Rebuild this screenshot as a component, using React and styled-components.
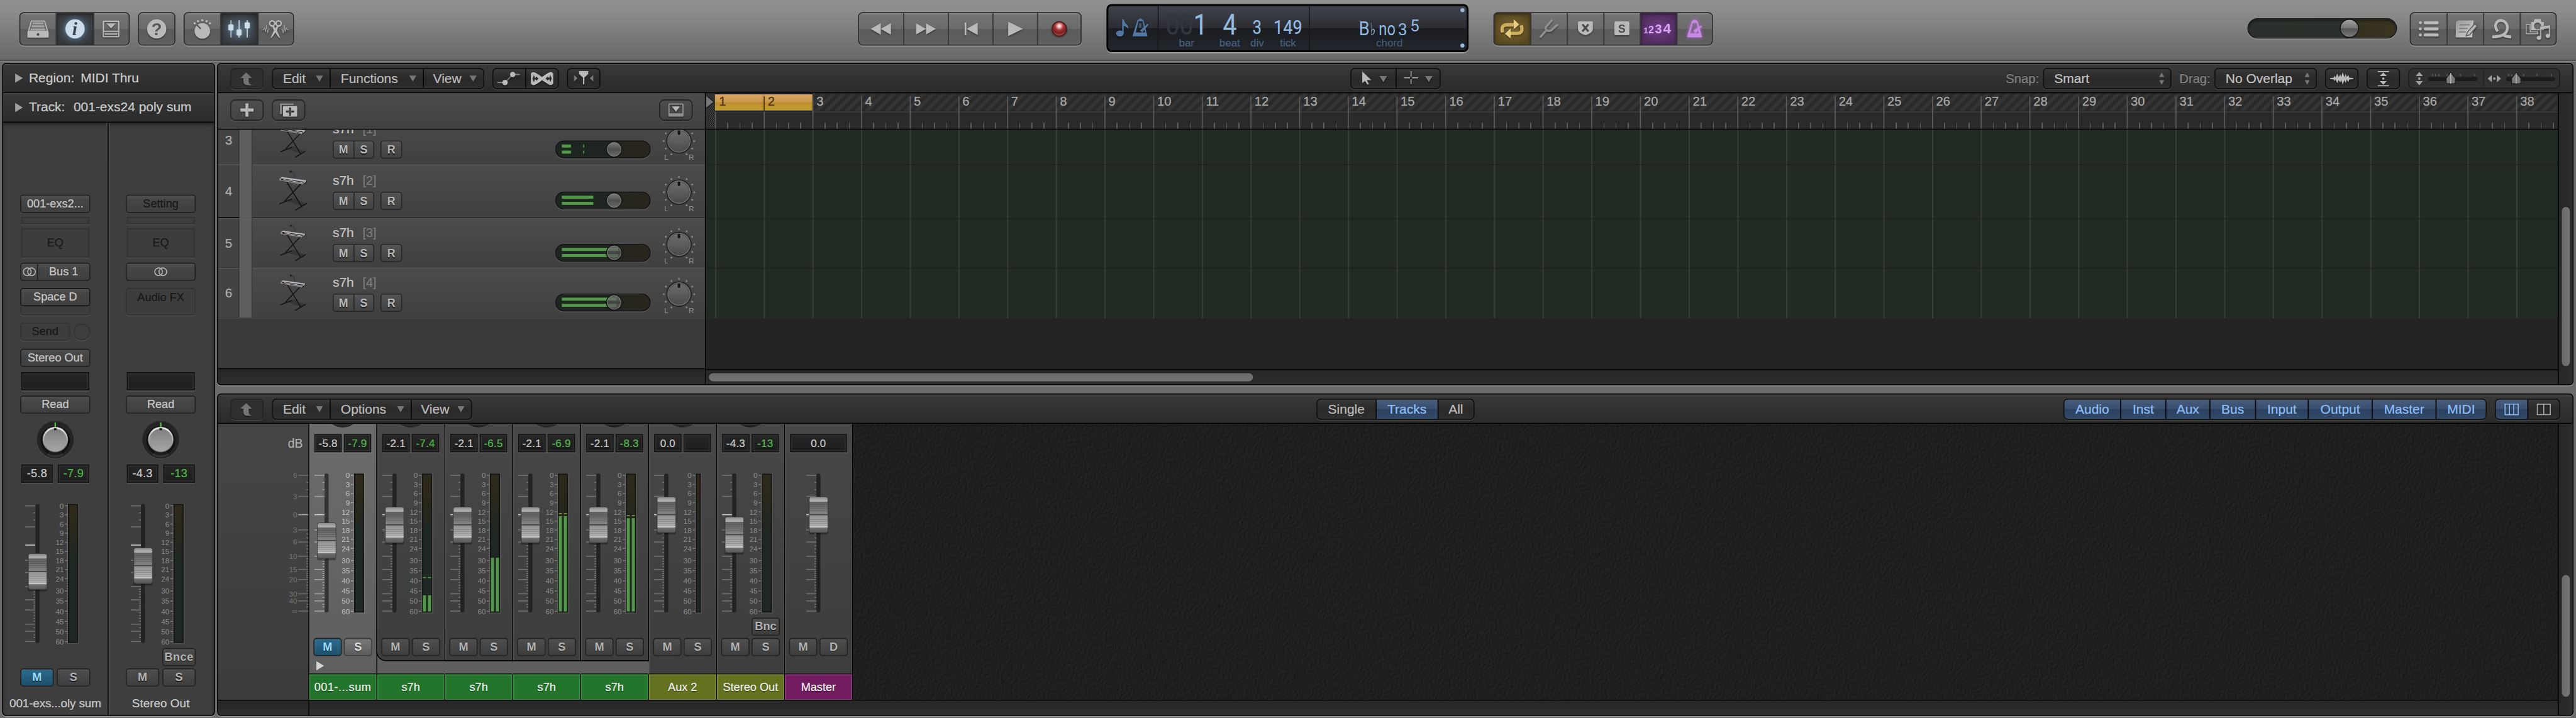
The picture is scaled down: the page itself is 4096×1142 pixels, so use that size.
import React from "react";
import styled, { createGlobalStyle, css } from "styled-components";

const Global = createGlobalStyle`
  html, body { margin: 0; padding: 0; background: #6b6b6b; overflow: hidden; }
  * { box-sizing: border-box; }
`;

const Viewport = styled.div`
  width: 4096px;
  height: 1142px;
  overflow: hidden;
`;

const Desk = styled.div`
  width: 5080px;
  height: 1416px;
  transform: scale(0.8063, 0.8065);
  transform-origin: 0 0;
  display: flex;
  flex-direction: column;
  background: #6b6b6b;
  font-family: "Liberation Sans", Arial, sans-serif;
  font-size: 26px;
  color: #c4c4c4;
  -webkit-text-stroke: 0.3px;
  white-space: pre;
`;

/* ---------- control bar ---------- */

const ControlBar = styled.header`
  flex: none;
  height: 124px;
  display: grid;
  grid-template-columns: 1692px 441px 49px 714px 49px 433px 1fr;
  align-items: start;
  background: linear-gradient(#919191, #8b8b8b 20%, #676767 118px, #4e4e4e 118px, #4e4e4e 120px, #868686 120px, #868686 122px, #6b6b6b 122px);
`;

const BarCell = styled.div`
  display: flex;
  padding: ${(p) => p.$pad || "24px 0 0"};
  gap: ${(p) => p.$gap || 0}px;
  justify-content: ${(p) => p.$justify || "flex-start"};
`;

const ButtonGroup = styled.div`
  display: flex;
  height: 66px;
  border: 2px solid #2e2e2e;
  border-radius: 9px;
  overflow: hidden;
  box-shadow: 0 2px 0 rgba(255, 255, 255, 0.22);
  background: #2e2e2e;
`;

const barTone = {
  plain: "linear-gradient(#7c7c7c 0, #747474 3px, #6a6a6a 50%, #5b5b5b 50%, #606060)",
  lit: "radial-gradient(ellipse at 50% 50%, #55616b 0, #3f464c 45%, #35383b 80%)",
  cycle: "radial-gradient(ellipse, #7b6837, #594820 75%)",
  count: "radial-gradient(ellipse, #6e3d82, #4f2d5e 75%)",
};

const BarButton = styled.button`
  all: unset;
  box-sizing: border-box;
  width: ${(p) => p.$w}px;
  height: 62px;
  display: flex;
  align-items: center;
  justify-content: center;
  background: ${(p) => barTone[p.$tone || "plain"]};
  box-shadow: ${(p) => (p.$tone && p.$tone !== "plain" ? "inset 0 2px 5px rgba(0,0,0,.5)" : "inset 0 2px 0 rgba(255,255,255,.14)")};
  & + & { border-left: 2px solid #3a3a3a; }
`;

const Glyph = styled.svg`
  display: block;
  width: 100%;
  height: 100%;
  overflow: visible;
  fill: #b9b9b9;
  filter: ${(p) => (p.$glow ? `drop-shadow(0 0 ${p.$spread || 5}px ${p.$glow})` : "drop-shadow(0 2px 1px rgba(0,0,0,.4))")};
`;

const Lcd = styled.div`
  margin-top: 8px;
  height: 95px;
  border: solid #000;
  border-width: 4px 4px 4px;
  border-radius: 10px;
  box-shadow: 0 2px 0 #a8a8a8;
  display: grid;
  grid-template-columns: 97px 298px 1fr;
  background: linear-gradient(#404349, #2a2c32 50%, #1a1c20 50%, #22252b);
`;

const LcdCell = styled.div`
  display: flex;
  height: 87px;
  & + & { border-left: 2px solid #16181b; }
`;

const Field = styled.div`
  width: ${(p) => p.$w}px;
  margin-left: ${(p) => p.$ml || 0}px;
  display: flex;
  flex-direction: column;
  align-items: center;
`;

const Digits = styled.div`
  height: 58px;
  display: flex;
  justify-content: center;
  align-items: flex-end;
  font-family: Roboto, sans-serif;
  font-size: ${(p) => p.$size}px;
  line-height: ${(p) => p.$size}px;
  padding-bottom: 0;
  color: #94bbe0;
  transform: translateY(${(p) => p.$drop || 0}px) scaleX(${(p) => p.$sx || 0.8});
  i { font-style: normal; color: #31373f; }
`;

const Caption = styled.div`
  font-size: 21px;
  line-height: 24px;
  color: #45607e;
  margin-top: 3px;
`;

const VolumePill = styled.div`
  width: 295px;
  height: 40px;
  margin-top: 12px;
  border-radius: 20px;
  padding: 2px;
  border: 2px solid #1b1b1b;
  background: linear-gradient(90deg, #2c302c, #2a302b 62%, #343120 72%, #3a3420);
  box-shadow: 0 2px 0 rgba(255, 255, 255, 0.18), inset 0 3px 4px rgba(0, 0, 0, 0.5);
  display: flex;
  justify-content: flex-end;
  align-items: center;
  padding-right: 73px;
`;

const PillThumb = styled.div`
  flex: none;
  width: ${(p) => p.$d}px;
  height: ${(p) => p.$d}px;
  border-radius: 50%;
  background: linear-gradient(#a0a0a0, #747474 48%, #565656 52%, #7b7b7b);
  border: 2px solid #161616;
  box-shadow: inset 0 1px 1px #aaa;
`;

/* ---------- panels ---------- */

const Body = styled.div`
  flex: 1;
  display: flex;
  gap: 4px;
  padding: 0 5px 4px 4px;
`;

const Panel = styled.section`
  border: 2px solid #000;
  border-radius: 8px;
  overflow: hidden;
  display: flex;
  flex-direction: column;
  background: #2c2c2c;
  box-shadow: 0 2px 0 #969696;
`;

const InspectorPanel = styled(Panel)`
  flex: none;
  width: 420px;
  background: #3e3e3e;
`;

const MainColumn = styled.div`
  flex: 1;
  min-width: 0;
  display: flex;
  flex-direction: column;
  gap: 16px;
`;

const ArrangePanel = styled(Panel)` flex: none; height: 636px; `;
const MixerPanel = styled(Panel)` flex: 1; `;

const DisclosureRow = styled.div`
  flex: none;
  height: 58px;
  border-bottom: 2px solid #000;
  box-shadow: inset 0 2px 0 #4c4c4c;
  background: linear-gradient(#383838, #2b2b2b);
  display: flex;
  align-items: center;
  padding: 0 0 1px 24px;
  color: #cdcdcd;
`;

const Arrow = styled.i`
  flex: none;
  width: 0;
  height: 0;
  border-left: 15px solid ${(p) => p.$c || "#a0a0a0"};
  border-top: 9px solid transparent;
  border-bottom: 9px solid transparent;
  margin-right: 12px;
`;

const RowName = styled.span` width: ${(p) => p.$w}px; `;

/* ---------- channel strips ---------- */

const Channels = styled.div`
  flex: 1;
  display: grid;
  grid-template-columns: 208px 1fr;
  box-shadow: inset 0 4px 6px rgba(0, 0, 0, 0.4);
`;

const Channel = styled.div`
  display: flex;
  flex-direction: column;
  align-items: center;
  & + & { box-shadow: inset 2px 0 0 #575757; padding-right: 2px; }
  &:first-child { border-right: 2px solid #000; box-shadow: inset -2px 0 0 #4a4a4a; }
`;

const Slot = styled.div`
  flex: none;
  width: ${(p) => p.$w || 138}px;
  height: ${(p) => p.$h || 36}px;
  margin-top: ${(p) => p.$mt || 0}px;
  display: flex;
  align-items: center;
  justify-content: center;
  font-size: 22.5px;
  border: 2px solid #202020;
  border-radius: 6px;
  color: #c9c9c9;
  background: linear-gradient(#505050, #464646 25%, #3f3f3f);
  box-shadow: inset 0 1px 0 #5b5b5b;
  ${(p) => p.$dim && css` color: #181818; `}
  ${(p) => p.$hollow && css`
    color: #181818;
    background: #3d3d3d;
    border-color: #323232;
    box-shadow: 0 2px 0 #4d4d4d;
  `}
  ${(p) => p.$square && css` border-radius: 0; `}
  ${(p) => p.$top && css` align-items: flex-start; line-height: 34px; `}
`;

const InnerSlot = styled(Slot)`
  margin: -2px -2px 0;
  border-color: #181818;
  line-height: normal;
  align-items: center;
`;

const Spacer = styled.div` flex: none; height: ${(p) => p.$h}px; `;
const Line = styled.div`
  flex: none;
  width: ${(p) => p.$w || 138}px;
  margin-top: ${(p) => p.$mt || 0}px;
  display: flex;
  justify-content: ${(p) => p.$justify || "space-between"};
`;

const SplitMark = styled.div`
  width: 33px;
  height: 32px;
  border-right: 2px solid #202020;
  display: flex;
  align-items: center;
  justify-content: center;
`;
const SplitText = styled.div` flex: 1; text-align: center; `;

const SendDial = styled.div`
  width: 33px;
  height: 33px;
  margin-top: 2px;
  border-radius: 50%;
  border: 2px solid #323232;
  box-shadow: 0 2px 0 #4d4d4d;
`;

const Readout = styled.div`
  flex: none;
  width: ${(p) => p.$w}px;
  height: 36px;
  margin-top: ${(p) => p.$mt || 0}px;
  border: 2px solid #111;
  box-shadow: inset 0 0 0 2px #303030, 0 2px 0 rgba(255, 255, 255, 0.12);
  background: linear-gradient(#262626, #1d1d1d);
  display: flex;
  align-items: center;
  justify-content: center;
  font-size: ${(p) => p.$size || 22.5}px;
  letter-spacing: 0.3px;
  color: ${(p) => (p.$green ? "#50b848" : "#c8c8c8")};
`;

const MiniButton = styled.button`
  all: unset;
  box-sizing: border-box;
  flex: none;
  width: ${(p) => p.$w || 66}px;
  height: 36px;
  border: 2px solid #222;
  border-radius: 6px;
  font-size: 22.5px;
  font-weight: 700;
  text-align: center;
  line-height: 32px;
  letter-spacing: ${(p) => p.$ls || 0}px;
  color: #b2b2b2;
  text-shadow: 0 2px 1px rgba(0, 0, 0, 0.6);
  -webkit-text-stroke: 0;
  background: linear-gradient(#4e4e4e, #3e3e3e);
  box-shadow: inset 0 1px 0 #5a5a5a;
  ${(p) => p.$tone === "mute" && css` color: #9adcff; background: linear-gradient(#2c6c8e, #1d4f6b); `}
  ${(p) => p.$tone === "pale" && css` color: #dcdcdc; background: linear-gradient(#787878, #5c5c5c); border-color: #3c3c3c; `}
`;

const ChannelName = styled.div`
  margin-top: 18px;
  line-height: 30px;
  font-size: 23.5px;
  letter-spacing: ${(p) => p.$ls || 0}px;
  color: #cacaca;
`;

const FaderArt = styled.svg`
  display: block;
  flex: none;
  overflow: visible;
  font-family: "Liberation Sans", Arial, sans-serif;
  -webkit-text-stroke: 0;
`;

const MAJOR = [3.5, 45, 81, 111, 135, 163, 189, 209, 237, 251, 271];
const MINOR = [17.5, 31.5, 119, 127, 142, 149, 156, 168, 173, 178, 183.5, 193, 197, 201, 205, 214.5, 220, 225.5, 231, 244, 258, 263];
const METER = [["0", 3.5], ["3", 21.5], ["6", 39.5], ["9", 57.5], ["12", 75.5], ["15", 93.5], ["18", 111.5], ["21", 129.5], ["24", 147.5], ["30", 171.5], ["35", 191.5], ["40", 211.5], ["45", 231.5], ["50", 251.5], ["60", 271.5]];

function meterMinor() {
  const out = [];
  for (let i = 0; i < METER.length - 1; i++) {
    const a = METER[i][1];
    const b = METER[i + 1][1];
    const n = b - a > 19 ? 5 : 6;
    for (let k = 1; k < n; k++) out.push(a + ((b - a) * k) / n);
  }
  return out;
}
const METER_MINOR = meterMinor();

function Fader({ at, meterX = 78, meterW = 20, level, peak, peakColor = "#56a046", bright, noMeter }) {
  const tick = bright ? "#a2a2a2" : "#727272";
  return (
    <FaderArt width="104" height="274" viewBox="0 0 104 274">
      {MAJOR.map((y, i) => (
        <rect key={y} x="0" y={y - 1} width="20" height="2" fill={i === 2 ? "#cfcfcf" : tick} />
      ))}
      {MINOR.map((y) => (
        <rect key={y} x="16" y={y - 1} width="4" height="2" fill={tick} />
      ))}
      <rect x="20" y="0" width="8" height="274" rx="3" fill={bright ? "#333" : "#232323"} />
      {!noMeter && (
        <g>
          {METER.map(([n, y]) => (
            <g key={n}>
              <text x={meterX - 8} y={y + 5.4} fontSize="14.5" textAnchor="end" fill={bright ? "#c2c2c2" : "#8c8c8c"}>{n}</text>
              <rect x={meterX - 6} y={y - 1} width="6" height="2" fill={bright ? "#a2a2a2" : "#777"} />
            </g>
          ))}
          {METER_MINOR.map((y) => (
            <rect key={y} x={meterX - 2} y={y - 0.8} width="2" height="1.6" fill={bright ? "#a2a2a2" : "#777"} />
          ))}
          <rect x={meterX - 1} y="-1" width={meterW + 3} height="277" fill="rgba(255,255,255,.08)" />
          <rect x={meterX} y="0" width={meterW} height="274" fill="#131313" />
          <rect x={meterX + 2} y="2" width={meterW - 4} height="270" fill="url(#well)" />
          {peak !== undefined && [2, 12].map((x) => (
            <rect key={x} x={meterX + x} y={peak} width="6" height="2" fill={peakColor} />
          ))}
          {level !== undefined && [2, 12].map((x) => (
            <rect key={x} x={meterX + x} y={level} width="6" height={272 - level} fill="#529a49" />
          ))}
        </g>
      )}
      <g transform={`translate(6 ${at - 35})`}>
        <rect x="-1" y="4" width="38" height="70" rx="4" fill="rgba(0,0,0,.3)" />
        <rect x="0" y="0" width="36.5" height="70.5" rx="4" fill="url(#cap)" stroke="#3a3a3a" strokeWidth="1" />
        <rect x="0.5" y="34" width="35.5" height="2" fill="#3c3c3c" />
        {[15, 19, 23, 27].map((y) => <rect key={y} x="0.5" y={y} width="35.5" height="1" fill="rgba(0,0,0,.25)" />)}
        {[44, 48, 52, 56].map((y) => <rect key={y} x="0.5" y={y} width="35.5" height="1" fill="rgba(0,0,0,.18)" />)}
      </g>
    </FaderArt>
  );
}

const DefsArt = styled.svg` display: block; width: 0; height: 0; position: absolute; `;

const SharedDefs = () => (
  <DefsArt>
    <defs>
      <linearGradient id="well" x1="0" y1="0" x2="0" y2="1">
        <stop offset="0" stopColor="#2e2a1b" />
        <stop offset=".2" stopColor="#29271b" />
        <stop offset=".4" stopColor="#1f2722" />
        <stop offset="1" stopColor="#1f2724" />
      </linearGradient>
      <linearGradient id="cap" x1="0" y1="0" x2="0" y2="1">
        <stop offset="0" stopColor="#8c8c8c" />
        <stop offset=".13" stopColor="#b4b4b4" />
        <stop offset=".14" stopColor="#606060" />
        <stop offset=".48" stopColor="#858585" />
        <stop offset=".52" stopColor="#929292" />
        <stop offset=".8" stopColor="#b2b2b2" />
        <stop offset=".85" stopColor="#d2d2d2" />
        <stop offset=".86" stopColor="#6e6e6e" />
        <stop offset="1" stopColor="#585858" />
      </linearGradient>
      <linearGradient id="knob" x1="0" y1="0" x2="0" y2="1">
        <stop offset="0" stopColor="#7f7f7f" />
        <stop offset="1" stopColor="#a6a6a6" />
      </linearGradient>
      <linearGradient id="rim" x1="0" y1="0" x2="0" y2="1">
        <stop offset="0" stopColor="#f0f0f0" />
        <stop offset="1" stopColor="#6a6a6a" />
      </linearGradient>
      <linearGradient id="pan" x1="0" y1="0" x2="0" y2="1">
        <stop offset="0" stopColor="#6c6c6c" />
        <stop offset="1" stopColor="#4c4c4c" />
      </linearGradient>
      <linearGradient id="thumb" x1="0" y1="0" x2="0" y2="1">
        <stop offset="0" stopColor="#828282" />
        <stop offset=".5" stopColor="#4e4e4e" />
        <stop offset="1" stopColor="#6e6e6e" />
      </linearGradient>
      <linearGradient id="paper" x1="0" y1="0" x2="1" y2="1">
        <stop offset="0" stopColor="#9a9a9a" />
        <stop offset="1" stopColor="#cfcfcf" />
      </linearGradient>
      <radialGradient id="rec" cx=".5" cy=".3" r=".7">
        <stop offset="0" stopColor="#ffffff" />
        <stop offset=".15" stopColor="#f6bcbc" />
        <stop offset=".4" stopColor="#a63a3a" />
        <stop offset=".7" stopColor="#7c1f1f" />
        <stop offset="1" stopColor="#c25050" />
      </radialGradient>
    </defs>
  </DefsArt>
);

const PanDial = () => (
  <FaderArt width="74" height="74" viewBox="-37 -37 74 74">
    <circle r="37" fill="#4a4a4a" cy="1" />
    <circle r="36.5" fill="#242424" />
    <path d="M-11 20 L-18 31 A37 37 0 0 0 18 31 L11 20Z" fill="#343434" stroke="#151515" strokeWidth="1" />
    <circle r="29" cy="2" fill="rgba(0,0,0,.45)" />
    <rect x="-1.5" y="-34" width="3" height="9" fill="#45c234" />
    <circle r="25" fill="url(#rim)" />
    <circle r="22.5" cy="1" fill="url(#knob)" />
    <rect x="-2.5" y="-23" width="5" height="4.5" rx="1" fill="#111" />
  </FaderArt>
);

const Stereo = () => (
  <svg width="26" height="18" viewBox="0 0 26 18" fill="none" stroke="#b4b4b4" strokeWidth="2">
    <circle cx="8.8" cy="9" r="7.6" />
    <circle cx="17.2" cy="9" r="7.6" />
  </svg>
);

function Inspector() {
  return (
    <InspectorPanel>
      <DisclosureRow><Arrow /><RowName $w={102}>Region:</RowName><span>MIDI Thru</span></DisclosureRow>
      <DisclosureRow><Arrow /><RowName $w={88}>Track:</RowName><span>001-exs24 poly sum</span></DisclosureRow>
      <Channels>
        <Channel>
          <Slot $mt={142}>001-exs2...</Slot>
          <Slot $mt={8} $w={134} $h={14} $hollow $square />
          <Slot $mt={8} $w={134} $h={58} $hollow $square>EQ</Slot>
          <Slot $mt={10}><SplitMark><Stereo /></SplitMark><SplitText>Bus 1</SplitText></Slot>
          <Slot $mt={14} $h={54} $hollow $top><InnerSlot>Space D</InnerSlot></Slot>
          <Line $mt={14}><Slot $w={98} $hollow>Send</Slot><SendDial /></Line>
          <Slot $mt={16}>Stereo Out</Slot>
          <Readout $w={134} $mt={10} />
          <Slot $mt={10}>Read</Slot>
          <Spacer $h={14} />
          <PanDial />
          <Line $w={134} $mt={12}><Readout $w={62}>-5.8</Readout><Readout $w={62} $green>-7.9</Readout></Line>
          <Line $w={118} $mt={42}><Fader at={133} meterX={84} /></Line>
          <Line $mt={50}><MiniButton $tone="mute">M</MiniButton><MiniButton>S</MiniButton></Line>
          <ChannelName $ls={-0.2}>001-exs...oly sum</ChannelName>
        </Channel>
        <Channel>
          <Slot $mt={142} $dim>Setting</Slot>
          <Slot $mt={8} $w={134} $h={14} $hollow $square />
          <Slot $mt={8} $w={134} $h={58} $hollow $square>EQ</Slot>
          <Slot $mt={10}><Stereo /></Slot>
          <Slot $mt={14} $h={54} $hollow $top>Audio FX</Slot>
          <Readout $w={134} $mt={112} />
          <Slot $mt={10}>Read</Slot>
          <Spacer $h={14} />
          <PanDial />
          <Line $w={134} $mt={12}><Readout $w={62}>-4.3</Readout><Readout $w={62} $green>-13</Readout></Line>
          <Line $w={118} $mt={42}><Fader at={121.5} meterX={84} /></Line>
          <Line $mt={10} $justify="flex-end"><MiniButton $ls={0.6}>Bnce</MiniButton></Line>
          <Line $mt={4}><MiniButton>M</MiniButton><MiniButton>S</MiniButton></Line>
          <ChannelName>Stereo Out</ChannelName>
        </Channel>
      </Channels>
    </InspectorPanel>
  );
}

/* ---------- panel toolbars ---------- */

const Toolbar = styled.div`
  flex: none;
  height: 58px;
  border-bottom: 2px solid #000;
  display: grid;
  grid-template-columns: 1fr auto 1fr;
  background: linear-gradient(#4a4a4a 0, #4a4a4a 2px, #393939 2px, #2a2a2a);
  padding: 8px 24px 0;
`;

const Side = styled.div`
  display: flex;
  gap: 16px;
  justify-content: ${(p) => (p.$end ? "flex-end" : "flex-start")};
`;

const Segments = styled.div`
  flex: none;
  display: flex;
  height: 42px;
  border: 2px solid #0e0e0e;
  border-radius: 9px;
  overflow: hidden;
  box-shadow: 0 2px 0 #414141;
  background: linear-gradient(#393939, #2a2828 50%, #2e2e2e);
  ${(p) => p.$faint && css` border-color: #222; background: #2f2f2f; `}
  ${(p) => p.$raised && css` border-color: #222; border-radius: 10px; background: linear-gradient(#4e4e4e, #434343); box-shadow: 0 2px 0 #515151; `}
`;

const Segment = styled.button`
  all: unset;
  box-sizing: border-box;
  width: ${(p) => p.$w}px;
  height: 38px;
  line-height: 38px;
  display: flex;
  align-items: center;
  justify-content: ${(p) => (p.$menu ? "space-between" : "center")};
  padding: ${(p) => (p.$menu ? `0 13px 0 ${p.$pl || 20}px` : 0)};
  color: ${(p) => (p.$on ? "#8fbff7" : "#bdbdbd")};
  background: ${(p) => (p.$on ? "linear-gradient(#485d7c, #394f70 48%, #2b405e 52%, #324a6b)" : "none")};
  & + & { border-left: 2px solid #060606; }
`;

const Down = styled.i`
  width: 0;
  height: 0;
  border-top: 12px solid #777;
  border-left: 7px solid transparent;
  border-right: 7px solid transparent;
`;

const FieldLabel = styled.span`
  line-height: 42px;
  font-size: 25px;
  color: #858585;
  text-shadow: 0 -2px 0 #161616;
  margin-right: -8px;
`;

const Select = styled.div`
  flex: none;
  width: ${(p) => p.$w}px;
  height: 42px;
  border: 2px solid #0e0e0e;
  border-radius: 8px;
  box-shadow: 0 2px 0 #414141;
  background: linear-gradient(#393939, #2a2828 50%, #2e2e2e);
  display: flex;
  align-items: center;
  justify-content: space-between;
  padding: 0 12px 0 20px;
  color: #c4c4c4;
`;

const Stepper = () => (
  <svg width="10" height="24" viewBox="0 0 10 24" fill="#777"><path d="M0 9L5 0L10 9ZM0 15L5 24L10 15Z" /></svg>
);

const UpGlyph = styled(Glyph)` fill: #747474; `;
const Up = () => (
  <UpGlyph viewBox="2 2 62 38">
    <path d="M31.5 9L43 20H36.5V27Q36.5 33 45 34H35Q26 34 26 26V20H20Z" />
  </UpGlyph>
);

const ZoomArt = styled.svg`
  flex: none;
  display: block;
  width: 300px;
  height: 42px;
`;

const Pointer = ({ x }) => (
  <g>
    <path d={`M${x} 143L${x + 9} 154V165H${x - 9}V154Z`} fill="#777" stroke="#151515" strokeWidth="1.5" />
    <path d={`M${x} 144V165`} stroke="#b5b5b5" strokeWidth="2" />
  </g>
);

const ZoomSliders = () => (
  <ZoomArt viewBox="4749 134 300 42">
    <rect x="4750" y="135" width="298" height="39" rx="10" fill="#303030" stroke="#1c1c1c" strokeWidth="2" />
    <rect x="4897" y="136" width="2" height="38" fill="#252525" />
    <g fill="#a3a3a3">
      <path d="M4771 142L4778 150H4764ZM4771 168L4778 160H4764Z" />
      <circle cx="4771" cy="155" r="2.4" />
      <path d="M4906 155L4914 148V162ZM4932 155L4924 148V162Z" />
      <circle cx="4919" cy="155" r="2.4" />
    </g>
    <g fill="#5f5f5f">
      {[4797, 4803, 4810, 4826, 4852, 4880, 4947, 4953, 4958, 4977, 5003, 5031].map((x) => (
        <rect key={x} x={x - 1} y="146" width="2" height="4" />
      ))}
    </g>
    <rect x="4788" y="152" width="98" height="8" rx="4" fill="#1c1c1c" />
    <rect x="4942" y="152" width="97" height="8" rx="4" fill="#1c1c1c" />
    <Pointer x={4833} />
    <Pointer x={4962} />
  </ZoomArt>
);

/* ---------- arrange area ---------- */

const ArrangeBody = styled.div`
  flex: 1;
  min-height: 0;
  display: grid;
  grid-template-columns: 962px 3652px 1fr;
`;

const HeaderColumn = styled.div`
  border-right: 2px solid #000;
  display: flex;
  flex-direction: column;
  min-height: 0;
`;

const HeaderTools = styled.div`
  flex: none;
  height: 72px;
  border-bottom: 2px solid #000;
  background: linear-gradient(#5a5a5a 0, #5a5a5a 2px, #4a4a4a 2px, #414141);
  display: flex;
  gap: 16px;
  padding: 12px 24px 0;
`;
const Push = styled.div` flex: 1; `;

const TrackList = styled.div`
  height: 472px;
  overflow: hidden;
  display: flex;
  flex-direction: column;
  justify-content: flex-end;
  background: #3b3b3b;
`;

const TrackRow = styled.div`
  flex: none;
  height: ${(p) => p.$h}px;
  display: grid;
  grid-template-columns: 42px 26px 1fr;
`;

const TrackNumber = styled.div`
  border-bottom: 2px solid #000;
  box-shadow: inset 0 2px 0 #555, inset -2px 0 0 #333;
  background: #434343;
  color: #b0b0b0;
  font-size: 25px;
  padding-top: 2px;
  display: flex;
  align-items: center;
  justify-content: center;
`;

const Stripe = styled.div` background: #5e5e5e; border-right: 2px solid #343434; `;

const TrackBody = styled.div`
  border-bottom: 2px solid #242424;
  background: linear-gradient(#585858 0, #585858 2px, #4b4b4b 2px, #404040);
  display: flex;
  align-items: center;
  padding-left: 52px;
`;

const NameBlock = styled.div`
  margin-left: 50px;
  width: 439px;
  height: 98px;
  padding-top: 13px;
`;
const TrackTitle = styled.div`
  line-height: 30px;
  height: 30px;
  color: #c6c6c6;
  margin-bottom: 8px;
  span { margin-left: 17px; color: #7c7c7c; font-size: 24.5px; }
`;
const MsrRow = styled.div` display: flex; gap: 12px; `;
const Msr = styled.div`
  display: flex;
  height: 36px;
  border: 2px solid #262626;
  border-radius: 6px;
  background: linear-gradient(#535353, #424242);
  box-shadow: inset 0 1px 0 #606060;
  font-weight: 700;
  font-size: 22px;
  line-height: 33px;
  color: #b8b8b8;
  text-shadow: 0 2px 1px rgba(0,0,0,.6);
  -webkit-text-stroke: 0;
  span { width: 39px; text-align: center; }
  span + span { border-left: 2px solid #262626; }
`;

const TrackPill = styled.div`
  flex: none;
  width: 188px;
  height: 35px;
  margin-top: 38px;
  border: 2px solid #141414;
  border-radius: 17px;
  background: linear-gradient(90deg, #1e241f, #1e241f 60%, #28261c 80%);
  box-shadow: 0 2px 0 #565656;
`;
const PillArt = styled.svg` display: block; width: 184px; height: 31px; overflow: visible; `;

const DialArt = styled.svg`
  flex: none;
  width: 76px;
  height: 76px;
  margin: 8px 0 0 18px;
  overflow: visible;
  font-size: 14px;
  -webkit-text-stroke: 0;
`;

const DOTS = [-150, -120, -90, -60, -30, 0, 30, 60, 90, 120, 150];

const SynthArt = styled.svg`
  flex: none;
  width: 56px;
  height: 80px;
  transform: scale(${(p) => p.$s});
  transform-origin: 50% 55%;
`;

const Synth = ({ s }) => (
  <SynthArt viewBox="550 337 56 80" $s={s}>
    <path d="M564 397L595 408L603 402L578 391Z" fill="rgba(0,0,0,.18)" />
    <path d="M573 339.5Q583 341 581.5 352" fill="none" stroke="#333" strokeWidth="1.4" />
    <circle cx="573" cy="339.5" r="2.2" fill="#1b1b1b" />
    <g stroke="#161616" strokeWidth="2.2" strokeLinecap="round">
      <path d="M564.5 358L594.5 408M594 363L562 397" />
      <path d="M551 403L575 394M583 415L605 402" />
    </g>
    <path d="M551 354L555 350L605 357L604 361L597 365L551 357Z" fill="#8f8f95" />
    <path d="M556 350.5L604 357L602 359L554 352.5Z" fill="#b9b9bf" />
    <path d="M555 353L599 359.5L597 362.5L554 356Z" fill="#241a1b" />
    <path d="M559 355L597 361.5" stroke="#d8d8d8" strokeWidth="1.2" />
    <path d="M597 365L604 361L605 357" stroke="#222" strokeWidth="1.5" fill="none" />
  </SynthArt>
);

function Track({ n, name, h = 98, bars, peak, peakColor = "#56a046", over }) {
  return (
    <TrackRow $h={h}>
      <TrackNumber>{n}</TrackNumber>
      <Stripe />
      <TrackBody>
        <Synth s={h > 98 ? 1 : 0.91} />
        <NameBlock>
          <TrackTitle>s7h<span>{name}</span></TrackTitle>
          <MsrRow>
            <Msr><span>M</span><span>S</span></Msr>
            <Msr><span>R</span></Msr>
          </MsrRow>
        </NameBlock>
        <TrackPill>
          <PillArt viewBox="2 2 184 31">
            {[8, 20].map((y) => (
              <g key={y}>
                <rect x="13" y={y} width={bars} height="6" fill="#529a49" />
                {peak && <rect x={peak} y={y} width="2" height="6" fill={peakColor} />}
              </g>
            ))}
            <circle cx="116" cy="17.5" r="15" fill="url(#thumb)" fillOpacity={over ? 0.72 : 1} stroke="#151515" strokeWidth="2" />
            <circle cx="116" cy="17.5" r="13.6" fill="none" stroke="#8a8a8a" strokeWidth="1" />
          </PillArt>
        </TrackPill>
        <DialArt viewBox="-38 -37 76 76">
          {DOTS.map((a) => (
            <circle key={a} cx={30 * Math.sin((a * Math.PI) / 180)} cy={-30 * Math.cos((a * Math.PI) / 180)} r="1.9" fill="#858585" />
          ))}
          <circle r="25" fill="#202020" />
          <circle r="23" fill="#6e6e6e" />
          <circle r="21" fill="#484848" />
          <circle r="20" fill="url(#pan)" />
          <rect x="-2.6" y="-21" width="5.2" height="9" rx="2.5" fill="#151515" />
          <text x="-25" y="37.5" textAnchor="middle" fill="#969696">L</text>
          <text x="24.5" y="37.5" textAnchor="middle" fill="#969696">R</text>
        </DialArt>
      </TrackBody>
    </TrackRow>
  );
}

const ListFoot = styled.div`
  flex: none;
  height: 102px;
  border-bottom: 2px solid #000;
  box-shadow: inset 0 2px 0 #4a4a4a;
  background: #3a3a3a;
`;
const FootBar = styled.div` flex: 1; background: linear-gradient(#262626, #2e2e2e); `;

const Timeline = styled.div`
  display: flex;
  flex-direction: column;
  min-width: 0;
  overflow: hidden;
`;

const Ruler = styled.div`
  flex: none;
  height: 72px;
  border-bottom: 2px solid #000;
  display: flex;
  overflow: hidden;
  background:
    linear-gradient(transparent 34px, #1b1b1b 34px, #1b1b1b 36px, #3a3a3a 36px, #3a3a3a 38px, #2a2a2a 38px),
    repeating-linear-gradient(135deg, #2a2a2a 0 7px, #343434 7px 14px);
`;

const LeadIn = styled.div`
  flex: none;
  width: 18px;
  background: repeating-conic-gradient(#464646 0 25%, #1d1d1d 0 50%) 0 0 / 4px 4px;
`;

const quarterTicks = "linear-gradient(90deg, transparent 24px, #5c5c5c 24px, #5c5c5c 26px, transparent 26px, transparent 48px, #5c5c5c 48px, #5c5c5c 50px, transparent 50px, transparent 72px, #5c5c5c 72px, #5c5c5c 74px, transparent 74px) 0 58px / 96px 12px no-repeat";

const Bar = styled.div`
  flex: none;
  width: 96px;
  height: 70px;
  padding: 1px 0 0 8px;
  font-size: 25px;
  line-height: 28px;
  color: #ababab;
  display: flex;
  background:
    linear-gradient(#5c5c5c, #5c5c5c) 0 6px / 2px 64px no-repeat,
    ${quarterTicks};
  ${(p) => p.$cycle && css`
    color: #4b3110;
    background:
      linear-gradient(${p.$cycle === 1 ? "transparent, transparent" : "#4b3110, #4b3110"}) 0 6px / 2px 28px no-repeat,
      linear-gradient(#d8a567, #c9974a 50%, #bd8c2c 52%, #c3a132) 0 2px / 96px 32px no-repeat,
      linear-gradient(#5c5c5c, #5c5c5c) 0 36px / 2px 34px no-repeat,
      linear-gradient(#000, #000) 0 0 / 96px 36px no-repeat,
      ${quarterTicks};
  `}
`;

const Lanes = styled.div`
  flex: none;
  height: 372px;
  display: flex;
  flex-direction: column;
  background: linear-gradient(90deg, #364038 2px, transparent 2px) 18px 0 / 96px 100% #222b23;
`;
const Lane = styled.div`
  flex: none;
  height: ${(p) => p.$h}px;
  border-bottom: 2px solid rgba(25, 32, 25, 0.6);
`;
const LaneVoid = styled.div`
  flex: none;
  height: 102px;
  background: #232323;
  border-bottom: 2px solid #000;
`;
const HScroll = styled.div` flex: 1; background: linear-gradient(#262626, #2e2e2e); padding: 6px 6px; `;
const HThumb = styled.div`
  width: 1073px;
  height: 16px;
  border-radius: 8px;
  background: linear-gradient(#6a6a6a, #747474);
  box-shadow: 0 0 0 1px #222;
`;
const VScroll = styled.div`
  background: linear-gradient(90deg, #262626, #2e2e2e);
  border-left: 2px solid #000;
  padding: ${(p) => p.$pt}px 6px 0;
`;
const VThumb = styled.div`
  width: 16px;
  height: ${(p) => p.$h}px;
  border-radius: 8px;
  background: linear-gradient(90deg, #6a6a6a, #747474);
  box-shadow: 0 0 0 1px #222;
`;

function Arrange() {
  return (
    <ArrangePanel>
      <Toolbar>
        <Side>
          <Segments $faint><Segment $w={62}><Up /></Segment></Segments>
          <Segments>
            <Segment $w={112} $menu>Edit<Down /></Segment>
            <Segment $w={184} $menu>Functions<Down /></Segment>
            <Segment $w={119} $menu $pl={18}>View<Down /></Segment>
          </Segments>
          <Segments>
            <Segment $w={63}>
              <Glyph viewBox="974 136 63 38">
                <path d="M982 162.700H997M1012 147H1026" fill="none" stroke="#8a8a8a" strokeWidth="2.400" />
                <path d="M997 162.700L1012 147" fill="none" stroke="#7d7d7d" strokeWidth="2" />
                <circle cx="997" cy="162.700" r="5.300" /><circle cx="1012" cy="147" r="5.300" />
              </Glyph>
            </Segment>
            <Segment $w={64}>
              <Glyph viewBox="1039 136 60 38">
                <path d="M1047 145Q1049 141 1055 143Q1062 147 1069 152Q1076 147 1083 143Q1089 141 1091 145V165Q1089 169 1083 167Q1076 163 1069 158Q1062 163 1055 167Q1049 169 1047 165Z" />
                <path d="M1050 155l3-7 2 6 3-3 4 4-4 4-3-3-2 6zM1088 155l-3-7-2 6-3-3-4 4 4 4 3-3 2 6z" fill="#2c2c2c" />
                <path d="M1052 167Q1064 162 1069 155T1087 143" fill="none" stroke="#c8c8c8" strokeWidth="2.500" />
              </Glyph>
            </Segment>
          </Segments>
          <Segments>
            <Segment $w={62}>
              <Glyph viewBox="1120 136 62 38">
                <path d="M1142 140H1160V146L1152.400 153V166H1149.600V153L1142 146Z" />
                <path d="M1132 148L1139 154.500L1132 161ZM1170 148L1163 154.500L1170 161Z" fill="#7a7a7a" />
              </Glyph>
            </Segment>
          </Segments>
        </Side>
        <Segments>
          <Segment $w={87}>
            <Glyph viewBox="2666 136 86 38">
              <path d="M2687 141V164L2692.500 159.500L2697 167L2700 165.500L2696 158H2705Z" />
              <path d="M2721 150H2736L2728.500 162Z" fill="#777" />
            </Glyph>
          </Segment>
          <Segment $w={87}>
            <Glyph viewBox="2752 136 86 38">
              <path d="M2781 140V151M2781 156V166M2767 153.500H2779M2783 153.500H2795" stroke="#b5b5b5" strokeWidth="2" />
              <path d="M2809 150H2824L2816.500 162Z" fill="#777" />
            </Glyph>
          </Segment>
        </Segments>
        <Side $end>
          <FieldLabel>Snap:</FieldLabel>
          <Select $w={253}>Smart<Stepper /></Select>
          <FieldLabel>Drag:</FieldLabel>
          <Select $w={202}>No Overlap<Stepper /></Select>
          <Segments>
            <Segment $w={62}>
              <Glyph viewBox="4586 136 62 38">
                <path d="M4594 154L4601 153L4603 149L4605 153L4608 145L4611 152L4614 147L4616 152L4619 142L4622 152L4625 146L4627 152L4630 148L4632 153L4640 154V156L4632 157L4630 162L4627 157L4625 164L4622 158L4619 167L4616 158L4614 163L4611 158L4608 164L4605 157L4603 160L4601 157L4594 156Z" />
              </Glyph>
            </Segment>
          </Segments>
          <Segments>
            <Segment $w={62}>
              <Glyph viewBox="4668 136 62 38">
                <path d="M4688 140H4710V142.200H4688ZM4688 168H4710V170.200H4688ZM4699 143L4706 150H4692ZM4699 167L4706 160H4692Z" />
                <circle cx="4699" cy="155" r="2.300" />
              </Glyph>
            </Segment>
          </Segments>
          <ZoomSliders />
        </Side>
      </Toolbar>
      <ArrangeBody>
        <HeaderColumn>
          <HeaderTools>
            <Segments $raised><Segment $w={62}><Glyph viewBox="456 198 62 38"><path d="M484 204h6v10h10v6h-10v10h-6v-10h-10v-6h10z" /></Glyph></Segment></Segments>
            <Segments $raised>
              <Segment $w={62}>
                <Glyph viewBox="538 198 62 38">
                  <path d="M552 206q0-2 2-2h25v3h-23v18h-4z" fill="#8a8a8a" />
                  <path fillRule="evenodd" d="M560 209h24q2 0 2 2v17q0 2-2 2h-24q-2 0-2-2v-17q0-2 2-2zM570 212v6h-6v4h6v6h4v-6h6v-4h-6v-6z" />
                </Glyph>
              </Segment>
            </Segments>
            <Push />
            <Segments $raised>
              <Segment $w={62}>
                <Glyph viewBox="1302 198 62 38">
                  <path fillRule="evenodd" d="M1320 204h26q2 0 2 2v22q0 2-2 2h-26q-2 0-2-2v-22q0-2 2-2zM1320.500 206.500v17h25v-17z" fill="#8f8f8f" />
                  <path d="M1325 210h16l-8 10z" />
                </Glyph>
              </Segment>
            </Segments>
          </HeaderTools>
          <TrackList>
            <Track n="3" name="[1]" bars={18} peak={55} />
            <Track n="4" name="[2]" bars={62} h={106} />
            <Track n="5" name="[3]" bars={111} peak={127.5} peakColor="#9a8a44" over />
            <Track n="6" name="[4]" bars={108} peak={125} peakColor="#9a8a44" over />
            <ListFoot />
          </TrackList>
          <FootBar />
        </HeaderColumn>
        <Timeline>
          <Ruler>
            <LeadIn>
              <svg width="18" height="32" viewBox="0 0 18 32"><path d="M0 4L16 17L0 30Z" fill="#777" stroke="#141414" strokeWidth="1.500" /></svg>
            </LeadIn>
            {Array.from({ length: 38 }, (_, i) => (
              <Bar key={i} $cycle={i < 2 ? i + 1 : 0}>{i + 1}</Bar>
            ))}
          </Ruler>
          <Lanes>
            <Lane $h={70} />
            <Lane $h={106} />
            <Lane $h={98} />
          </Lanes>
          <LaneVoid />
          <HScroll><HThumb /></HScroll>
        </Timeline>
        <VScroll $pt={224}><VThumb $h={314} /></VScroll>
      </ArrangeBody>
    </ArrangePanel>
  );
}

/* ---------- mixer ---------- */

const MixerBody = styled.div`
  flex: 1;
  min-height: 0;
  display: grid;
  grid-template-columns: 180px 4434px 1fr;
`;

const ScaleColumn = styled.div`
  display: flex;
  flex-direction: column;
  border-right: 2px solid #000;
`;
const ScaleArea = styled.div`
  height: 546px;
  border-bottom: 2px solid #000;
  background: linear-gradient(#454545, #3c3c3c);
  display: flex;
  flex-direction: column;
  align-items: flex-end;
  padding-top: 25px;
`;
const DbLabel = styled.div`
  font-size: 24px;
  line-height: 28px;
  color: #b0b0b0;
  margin-right: 11px;
`;
const DbArt = styled.svg`
  display: block;
  margin-top: 45px;
  font-size: 14.5px;
  -webkit-text-stroke: 0;
  overflow: visible;
`;

const Desks = styled.div` display: flex; flex-direction: column; `;
const StripRow = styled.div`
  height: 546px;
  border-bottom: 2px solid #000;
  display: flex;
`;

const Strip = styled.div`
  flex: none;
  width: 134px;
  display: flex;
  flex-direction: column;
  background: ${(p) => (p.$folder ? "linear-gradient(#6b6b6b, #5f5f5f 470px)" : "#5f5f5f")};
  border-right: 2px solid #000;
  ${(p) => p.$joined && css` border-right: 0; `}
`;

const StripBody = styled.div`
  flex: none;
  height: ${(p) => (p.$child ? 468 : 494)}px;
  display: flex;
  flex-direction: column;
  align-items: center;
  overflow: hidden;
  background: linear-gradient(#474747, #3d3d3d);
  box-shadow: inset 2px 0 0 #4f4f4f, inset -2px 0 0 #4a4a4a, inset 0 -2px 0 #5a5a5a;
  width: 132px;
  ${(p) => p.$folder && css` background: linear-gradient(#6b6b6b, #5f5f5f); box-shadow: none; `}
  ${(p) => p.$child && css`
    border-bottom: 2px solid #000;
    width: 134px;
    border-right: 2px solid #000;
    box-shadow: inset 2px 0 0 #4f4f4f, inset -2px 0 0 #4a4a4a;
  `}
  ${(p) => p.$first && css`
    border-left: 2px solid #000;
    border-bottom-left-radius: 20px;
    margin-left: -2px;
    width: 136px;
  `}
`;

const ArcArt = styled.svg` display: block; flex: none; width: 74px; height: 8px; `;
const Arc = ({ hide }) => (
  <ArcArt viewBox="-37 30 74 8">
    {!hide && <g><circle r="37.500" fill="rgba(255,255,255,.1)" /><circle r="36.500" fill="#2a2a2a" stroke="#1a1a1a" strokeWidth="1" /></g>}
  </ArcArt>
);

const StripLine = styled.div`
  flex: none;
  width: ${(p) => p.$w}px;
  margin-top: ${(p) => p.$mt}px;
  padding-left: ${(p) => p.$pl || 0}px;
  height: ${(p) => p.$h || 36}px;
  display: flex;
  justify-content: ${(p) => (p.$end ? "flex-end" : "space-between")};
`;

const Folder = styled.div`
  flex: none;
  display: flex;
  align-items: center;
  height: 26px;
  margin: -30px 0 4px;
  padding-left: 14px;
`;

const ColorTag = styled.div`
  margin-top: auto;
  width: 132px;
  height: 50px;
  flex: none;
  border: 2px solid ${(p) => p.$edge};
  border-bottom-width: 1px;
  box-shadow: 0 -2px 0 #1c1c1c, 2px 0 0 #000;
  background: ${(p) => p.$fill};
  color: #eef3ee;
  font-size: 22.5px;
  line-height: 47px;
  text-align: center;
  letter-spacing: ${(p) => p.$ls || 0}px;
  text-shadow: 0 1px 1px rgba(0,0,0,.5);
`;

const Leather = styled.svg`
  flex: 1;
  display: block;
  height: 544px;
`;
const Foot = styled.div` flex: 1; background: linear-gradient(#262626, #2e2e2e); `;

const GREEN = ["#24752c", "#3c8a43"];
const OLIVE = ["#64721f", "#7d8940"];
const PLUM = ["#741c61", "#8b3f7b"];

const STRIPS = [
  { name: "001-...sum", vol: "-5.8", pk: "-7.9", at: 132, folder: true, color: GREEN, ls: 0.6 },
  { name: "s7h", vol: "-2.1", pk: "-7.4", at: 101, child: true, first: true, level: 240, peak: 204, color: GREEN },
  { name: "s7h", vol: "-2.1", pk: "-6.5", at: 101, child: true, level: 166, color: GREEN },
  { name: "s7h", vol: "-2.1", pk: "-6.9", at: 101, child: true, level: 84, peak: 78, peakColor: "#86a03c", color: GREEN },
  { name: "s7h", vol: "-2.1", pk: "-8.3", at: 101, child: true, level: 88, peak: 82, peakColor: "#86a03c", color: GREEN },
  { name: "Aux 2", vol: "0.0", pk: "", at: 81, thin: true, color: OLIVE },
  { name: "Stereo Out", vol: "-4.3", pk: "-13", at: 120.5, bounce: true, color: OLIVE },
  { name: "Master", vol: "0.0", at: 81, master: true, color: PLUM },
];

function MixerStrip({ s }) {
  return (
    <Strip $folder={s.folder} $joined={s.child}>
      <StripBody $folder={s.folder} $child={s.child} $first={s.first}>
        <Arc hide={s.master} />
        <StripLine $w={112} $mt={12}>
          {s.master ? <Readout $w={112} $size={21}>{s.vol}</Readout> : (
            <>
              <Readout $w={54} $size={21}>{s.vol}</Readout>
              <Readout $w={54} $size={21} $green>{s.pk}</Readout>
            </>
          )}
        </StripLine>
        <StripLine $w={112} $mt={42} $h={274} $pl={s.master ? 32 : 0}>
          <Fader at={s.at} level={s.level} peak={s.peak} peakColor={s.peakColor} bright={s.folder} noMeter={s.master} meterX={s.thin ? 82 : 78} meterW={s.thin ? 10 : 20} />
        </StripLine>
        <StripLine $w={116} $mt={10} $end>{s.bounce && <MiniButton $w={56}>Bnc</MiniButton>}</StripLine>
        <StripLine $w={116} $mt={4}>
          <MiniButton $w={56} $tone={s.folder ? "mute" : undefined}>M</MiniButton>
          <MiniButton $w={56} $tone={s.folder ? "pale" : undefined}>{s.master ? "D" : "S"}</MiniButton>
        </StripLine>
      </StripBody>
      {s.folder && <Folder><Arrow $c="#d4d4d4" /></Folder>}
      <ColorTag $fill={s.color[0]} $edge={s.color[1]} $ls={s.ls}>{s.name}</ColorTag>
    </Strip>
  );
}

const DB = ["6", "3", "0", "3", "6", "10", "15", "20", "30", "40", "∞"];

function Mixer() {
  return (
    <MixerPanel>
      <Toolbar>
        <Side>
          <Segments $faint><Segment $w={62}><Up /></Segment></Segments>
          <Segments>
            <Segment $w={112} $menu>Edit<Down /></Segment>
            <Segment $w={160} $menu>Options<Down /></Segment>
            <Segment $w={119} $menu $pl={18}>View<Down /></Segment>
          </Segments>
        </Side>
        <Segments>
          <Segment $w={115}>Single</Segment>
          <Segment $w={122} $on>Tracks</Segment>
          <Segment $w={71}>All</Segment>
        </Segments>
        <Side $end>
          <Segments>
            {[["Audio", 110], ["Inst", 89], ["Aux", 87], ["Bus", 90], ["Input", 104], ["Output", 126], ["Master", 126], ["MIDI", 99]].map(([t, w]) => (
              <Segment key={t} $w={w} $on>{t}</Segment>
            ))}
          </Segments>
          <Segments>
            <Segment $w={62} $on>
              <Glyph viewBox="0 0 62 38"><path d="M18 9h26v21h-26zM26.700 9v21M35.300 9v21" fill="none" stroke="#8fbff7" strokeWidth="2" /></Glyph>
            </Segment>
            <Segment $w={63}>
              <Glyph viewBox="0 0 62 38"><path d="M18 9h26v21h-26zM31 9v21" fill="none" stroke="#a8a8a8" strokeWidth="2" /></Glyph>
            </Segment>
          </Segments>
        </Side>
      </Toolbar>
      <MixerBody>
        <ScaleColumn>
          <ScaleArea>
            <DbLabel>dB</DbLabel>
            <DbArt width="60" height="274" viewBox="0 0 60 274">
              {DB.map((d, i) => (
                <g key={i}>
                  <text x="38" y={MAJOR[i] + 5.2} textAnchor="end" fill="#747474">{d}</text>
                  <rect x="40" y={MAJOR[i] - 1} width="20" height="2" fill={i === 2 ? "#a9a9a9" : "#6c6c6c"} />
                </g>
              ))}
              {MINOR.map((y) => <rect key={y} x="56" y={y - 1} width="4" height="2" fill="#6c6c6c" />)}
            </DbArt>
          </ScaleArea>
          <Foot />
        </ScaleColumn>
        <Desks>
          <StripRow>
            {STRIPS.map((s, i) => <MixerStrip key={i} s={s} />)}
            <Leather viewBox="0 0 3362 544" preserveAspectRatio="none">
              <filter id="grain" x="0" y="0" width="100%" height="100%" colorInterpolationFilters="sRGB">
                <feTurbulence type="fractalNoise" baseFrequency="0.22 0.17" numOctaves="2" seed="8" />
                <feDiffuseLighting surfaceScale="1.300" diffuseConstant="1" lightingColor="#242424">
                  <feDistantLight azimuth="215" elevation="60" />
                </feDiffuseLighting>
              </filter>
              <rect width="3362" height="544" fill="#1f1f1f" filter="url(#grain)" />
            </Leather>
          </StripRow>
          <Foot />
        </Desks>
        <VScroll $pt={298}><VThumb $h={240} /></VScroll>
      </MixerBody>
    </MixerPanel>
  );
}

/* ---------- control bar content ---------- */

const IceGlyph = styled(Glyph)` fill: #ccdcea; `;
const BlueGlyph = styled(Glyph)` fill: #5277a3; `;
const ChordGlyph = styled(Glyph)` fill: #94bbe0; filter: none; `;
const GoldGlyph = styled(Glyph)` fill: #e9cd7e; `;
const VioletGlyph = styled(Glyph)` fill: ${(p) => p.$c}; `;

function Controls() {
  return (
    <ControlBar>
      <BarCell $pad="24px 0 0 38px" $gap={16}>
        <ButtonGroup>
          <BarButton $w={70}>
            <Glyph viewBox="40 26 70 62">
              <path d="M62 41.500H88L94 62H56Z" fill="#666" stroke="#b4b4b4" strokeWidth="2.500" />
              <path d="M64.500 44H85.500L86.500 48H63.500ZM63 50H87L88 54H62ZM61 56H89L90 60.500H60Z" fill="#a2a2a2" />
              <path fillRule="evenodd" d="M54 62.500H96V74H54ZM75 65.500a2.600 2.600 0 1 0 .1 0z" />
            </Glyph>
          </BarButton>
          <BarButton $w={74} $tone="lit">
            <IceGlyph viewBox="112 26 72 62" $glow="#5d87ad">
              <circle cx="148" cy="57" r="19" />
              <text x="147.500" y="69" textAnchor="middle" fontFamily="Liberation Serif, serif" fontStyle="italic" fontWeight="700" fontSize="37" fill="#3b444c">i</text>
            </IceGlyph>
          </BarButton>
          <BarButton $w={70}>
            <Glyph viewBox="185 26 70 62">
              <path fillRule="evenodd" d="M204 40H234Q236 40 236 42V72Q236 74 234 74H204Q202 74 202 72V42Q202 40 204 40ZM205 43V60.500H233V43ZM204.500 63V71.500H233.500V63Z" />
              <path d="M209.500 46H228.500L219 56Z" /><rect x="206" y="64.500" width="26" height="5.500" fill="#9a9a9a" />
            </Glyph>
          </BarButton>
        </ButtonGroup>
        <ButtonGroup>
          <BarButton $w={70}>
            <Glyph viewBox="274 26 70 62">
              <circle cx="309" cy="57" r="19" />
              <text x="309" y="69" textAnchor="middle" fontWeight="700" fontSize="34" fill="#585858">?</text>
            </Glyph>
          </BarButton>
        </ButtonGroup>
        <ButtonGroup>
          <BarButton $w={70}>
            <Glyph viewBox="364 26 70 62">
              <circle cx="399" cy="61" r="15.300" />
              <path d="M388 49L396 57" stroke="#5a5a5a" strokeWidth="3" />
              {[[384, 46], [390.500, 42], [399, 40], [407.500, 42], [414, 46]].map(([x, y]) => <circle key={x} cx={x} cy={y} r="2.300" />)}
            </Glyph>
          </BarButton>
          <BarButton $w={74} $tone="lit">
            <IceGlyph viewBox="436 26 72 62" $glow="#5d87ad">
              {[[455.500, 48], [471.500, 58], [487.500, 44]].map(([x, y]) => (
                <g key={x}><rect x={x - 1} y="40" width="2" height="34" /><rect x={x - 5} y={y} width="10" height="12" rx="2" /></g>
              ))}
            </IceGlyph>
          </BarButton>
          <BarButton $w={70}>
            <Glyph viewBox="509 26 70 62">
              <g fill="none" stroke="#b9b9b9">
                <circle cx="536.500" cy="46" r="5.300" strokeWidth="3" /><circle cx="549.500" cy="46" r="5.300" strokeWidth="3" />
                <path d="M515 59h4l2-4 2 8 2-14 2 17 2-8h2M571 59h-4l-2-4-2 8-2-14-2 17-2-8h-2" strokeWidth="1.600" stroke="#9a9a9a" />
              </g>
              <path d="M539 50L543 56L547 50L550 51L546 60L553 76Q548 74 543 64Q538 74 533 76L540 60L536 51Z" />
            </Glyph>
          </BarButton>
        </ButtonGroup>
      </BarCell>

      <BarCell>
        <ButtonGroup>
          <BarButton $w={87}><Glyph viewBox="1695 26 87 62"><path d="M1718 57L1738 45.500V57L1758 45.500V68.500L1738 57V68.500Z" /></Glyph></BarButton>
          <BarButton $w={88}><Glyph viewBox="1782 26 88 62"><path d="M1846 57L1826 45.500V57L1806 45.500V68.500L1826 57V68.500Z" /></Glyph></BarButton>
          <BarButton $w={88}><Glyph viewBox="1870 26 88 62"><path d="M1902 44H1905.500V70H1902ZM1906 57L1928.500 44.500V69.500Z" /></Glyph></BarButton>
          <BarButton $w={88}><Glyph viewBox="1958 26 88 62"><path d="M1988 42.500L2017.500 57L1988 71.500Z" /></Glyph></BarButton>
          <BarButton $w={86}><Glyph viewBox="2046 26 86 62"><circle cx="2089" cy="57" r="14.500" fill="url(#rec)" stroke="#4a1616" strokeWidth="2" /></Glyph></BarButton>
        </ButtonGroup>
      </BarCell>
      <span />
      <Lcd>
        <LcdCell>
          <BlueGlyph viewBox="2186 12 95 87">
            <ellipse cx="2207.500" cy="66" rx="7.500" ry="6" />
            <path d="M2212 38h3q2 7 6 10 4 4 2.500 9-3-5-8.500-6v15h-3z" />
            <path fillRule="evenodd" d="M2242 40L2248 36L2254 40L2262 72H2232ZM2244 42L2239 64H2257L2252 42Z" />
            <path d="M2247 60L2262 47L2264 49L2252 64Z" /><rect x="2245" y="46" width="5" height="9" fill="#3b5470" />
          </BlueGlyph>
        </LcdCell>
        <LcdCell>
          <Field $w={86} $ml={12}><Digits $size={58} $drop={7.5} $sx={0.84}><i>00</i>1</Digits><Caption>bar</Caption></Field>
          <Field $w={48} $ml={18}><Digits $size={58} $drop={7.5} $sx={0.84}>4</Digits><Caption>beat</Caption></Field>
          <Field $w={36} $ml={12}><Digits $size={39} $drop={4.5} $sx={0.82}>3</Digits><Caption>div</Caption></Field>
          <Field $w={70} $ml={8}><Digits $size={39} $drop={4.5} $sx={0.86}>149</Digits><Caption>tick</Caption></Field>
        </LcdCell>
        <LcdCell>
          <ChordGlyph viewBox="2583 12 309 87" fontFamily="Roboto, sans-serif">
            <text x="2680" y="70" fontSize="39" textLength="21" lengthAdjust="spacingAndGlyphs">B</text>
            <text x="2702" y="70" fontSize="34" fontFamily="DejaVu Sans, sans-serif" textLength="11" lengthAdjust="spacingAndGlyphs">♭</text>
            <text x="2719" y="70" fontSize="36" textLength="33" lengthAdjust="spacingAndGlyphs">no</text>
            <text x="2757" y="70" fontSize="31" textLength="18" lengthAdjust="spacingAndGlyphs">3</text>
            <text x="2781" y="61.500" fontSize="31" textLength="18" lengthAdjust="spacingAndGlyphs">5</text>
            <text x="2740" y="92" fontSize="21" textAnchor="middle" fontFamily="Liberation Sans, sans-serif" fill="#45607e">chord</text>
            <circle cx="2884" cy="20" r="4" /><circle cx="2884" cy="90" r="4" />
          </ChordGlyph>
        </LcdCell>
      </Lcd>
      <span />
      <BarCell>
        <ButtonGroup>
          <BarButton $w={71} $tone="cycle">
            <GoldGlyph viewBox="2946 26 71 62">
              <path d="M2962 64Q2958 49 2971 49H2987" fill="none" stroke="#cfae5c" strokeWidth="6.500" />
              <path d="M2999 50Q3004 66 2990 66H2975" fill="none" stroke="#cfae5c" strokeWidth="6.500" />
              <path d="M2984 38L2995 48.500L2984 58ZM2978 56L2967 66.500L2978 76Z" />
            </GoldGlyph>
          </BarButton>
          <BarButton $w={72}>
            <Glyph viewBox="3019 26 70 62">
              <path d="M3036 74L3049 59M3060 39L3047 54Q3046 60 3053 61L3058 60L3071 48" fill="none" stroke="#8f8f8f" strokeWidth="4.500" />
            </Glyph>
          </BarButton>
          <BarButton $w={72}>
            <Glyph viewBox="3090 26 71 62">
              <path d="M3112 42H3138Q3140 42 3140 44V57Q3140 65 3125 70Q3110 65 3110 57V44Q3110 42 3112 42Z" />
              <path d="M3119 48L3131 62M3131 48L3119 62" stroke="#4c4c4c" strokeWidth="4" />
            </Glyph>
          </BarButton>
          <BarButton $w={72}>
            <Glyph viewBox="3162 26 71 62">
              <rect x="3182" y="42" width="30" height="28" rx="3" />
              <text x="3197" y="64" textAnchor="middle" fontWeight="700" fontSize="22" fill="#4c4c4c">S</text>
            </Glyph>
          </BarButton>
          <BarButton $w={72} $tone="count">
            <VioletGlyph viewBox="3234 26 71 62" fontWeight="700" $glow="#7d3f9c" $spread={2} $c="#dba6f3">
              <text x="3239.500" y="66" fontSize="16">1</text><text x="3249" y="66" fontSize="20">2</text>
              <text x="3262" y="66" fontSize="25">3</text><text x="3278.500" y="66" fontSize="28">4</text>
            </VioletGlyph>
          </BarButton>
          <BarButton $w={70}>
            <VioletGlyph viewBox="3307 26 70 62" $glow="#b066d6" $spread={4} $c="#c98ae6">
              <path fillRule="evenodd" d="M3336 41L3342 38L3348 41L3357 74H3326ZM3338 45L3333 66H3350L3346 45Z" />
              <path d="M3339 60L3355 50L3357 52L3343 66Z" />
            </VioletGlyph>
          </BarButton>
        </ButtonGroup>
      </BarCell>
      <BarCell $justify="flex-end" $gap={25} $pad="24px 38px 0 0">
        <VolumePill><PillThumb $d={38} /></VolumePill>
        <ButtonGroup>
          <BarButton $w={71}>
            <Glyph viewBox="4754 26 71 62">
              {[42, 54, 66].map((y) => <g key={y}><circle cx="4773" cy={y + 3} r="3" /><rect x="4780" y={y} width="29" height="6" rx="2" /></g>)}
            </Glyph>
          </BarButton>
          <BarButton $w={72}>
            <Glyph viewBox="4826 26 71 62">
              <path d="M4848 40H4878L4875 74H4842V47Q4842 41 4848 40Z" fill="url(#paper)" />
              <path d="M4850 49H4870M4849 56H4866M4848 63H4862" stroke="#808080" strokeWidth="2.500" />
              <path d="M4880 47L4885 51L4870 69L4863 71L4865 64Z" stroke="#5c5c5c" strokeWidth="2" />
            </Glyph>
          </BarButton>
          <BarButton $w={72}>
            <Glyph viewBox="4898 26 71 62">
              <path d="M4925 62Q4917 52 4923 44Q4929 37 4938 42Q4946 48 4944 58Q4941 73 4914 73M4937 70Q4943 73 4952 73" fill="none" stroke="#b9b9b9" strokeWidth="5.500" />
            </Glyph>
          </BarButton>
          <BarButton $w={71}>
            <Glyph viewBox="4970 26 71 62">
              <path d="M4981 48H4989V63H5004V67H4981Z" fill="none" stroke="#b0b0b0" strokeWidth="2" />
              <path fillRule="evenodd" d="M4991 43H4996L4998 37H5010L5012 43H5017V60H4991ZM5004 44a7 7 0 1 0 .1 0z" />
              <path d="M5009 52L5030 49V71a5 4.500 0 1 1-3-4V56L5012 58V75a5 4.500 0 1 1-3-4Z" stroke="#5c5c5c" strokeWidth="1" />
            </Glyph>
          </BarButton>
        </ButtonGroup>
      </BarCell>
    </ControlBar>
  );
}

export default function App() {
  return (
    <Viewport>
      <Global />
      <SharedDefs />
      <Desk>
        <Controls />
        <Body>
          <Inspector />
          <MainColumn>
            <Arrange />
            <Mixer />
          </MainColumn>
        </Body>
      </Desk>
    </Viewport>
  );
}
